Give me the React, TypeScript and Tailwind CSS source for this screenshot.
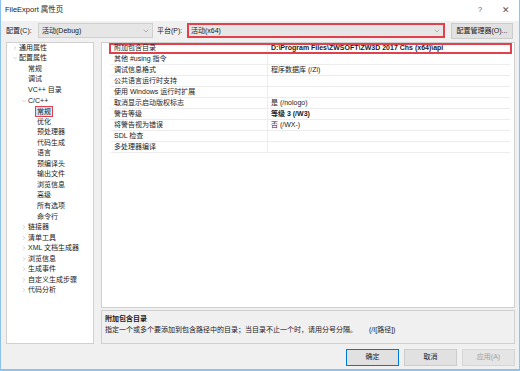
import React from 'react';
import { ChevronDown, ChevronRight } from 'lucide-react';

type TreeItem = { label: string; level: number; arrow?: 'closed' | 'open'; selected?: boolean };

const TREE: TreeItem[] = [
  { label: '通用属性', level: 0, arrow: 'closed' },
  { label: '配置属性', level: 0, arrow: 'open' },
  { label: '常规', level: 1 },
  { label: '调试', level: 1 },
  { label: 'VC++ 目录', level: 1 },
  { label: 'C/C++', level: 1, arrow: 'open' },
  { label: '常规', level: 2, selected: true },
  { label: '优化', level: 2 },
  { label: '预处理器', level: 2 },
  { label: '代码生成', level: 2 },
  { label: '语言', level: 2 },
  { label: '预编译头', level: 2 },
  { label: '输出文件', level: 2 },
  { label: '浏览信息', level: 2 },
  { label: '高级', level: 2 },
  { label: '所有选项', level: 2 },
  { label: '命令行', level: 2 },
  { label: '链接器', level: 1, arrow: 'closed' },
  { label: '清单工具', level: 1, arrow: 'closed' },
  { label: 'XML 文档生成器', level: 1, arrow: 'closed' },
  { label: '浏览信息', level: 1, arrow: 'closed' },
  { label: '生成事件', level: 1, arrow: 'closed' },
  { label: '自定义生成步骤', level: 1, arrow: 'closed' },
  { label: '代码分析', level: 1, arrow: 'closed' },
];

const PROPS: { name: string; value: string; bold?: boolean }[] = [
  { name: '附加包含目录', value: 'D:\\Program Files\\ZWSOFT\\ZW3D 2017 Chs (x64)\\api', bold: true },
  { name: '其他 #using 指令', value: '' },
  { name: '调试信息格式', value: '程序数据库 (/Zi)' },
  { name: '公共语言运行时支持', value: '' },
  { name: '使用 Windows 运行时扩展', value: '' },
  { name: '取消显示启动版权标志', value: '是 (/nologo)' },
  { name: '警告等级', value: '等级 3 (/W3)', bold: true },
  { name: '将警告视为错误', value: '否 (/WX-)' },
  { name: 'SDL 检查', value: '' },
  { name: '多处理器编译', value: '' },
];

const indent = ['pl-[3px]', 'pl-[12px]', 'pl-[21px]'];

const App: React.FC = () => {
  return (
    <div
      className="w-[520px] h-[371px] bg-[#f0f0f0] border-x border-b-2 border-[#8cc3ee] flex flex-col text-[7px] leading-[10px] text-[#1a1a1a] whitespace-nowrap"
      style={{ fontFamily: "'Liberation Sans', 'Noto Sans CJK SC', sans-serif" }}
    >
      {/* Title bar */}
      <div className="h-[21px] bg-white flex items-center pl-[4px] pr-[7px] text-[7.5px]">
        <span className="flex-1">FileExport 属性页</span>
        <span className="w-[12px] text-center text-[#555]">?</span>
        <span className="w-[12px] text-center text-[9px] text-[#555] ml-[14px]">✕</span>
      </div>

      {/* Config row */}
      <div className="h-[16px] flex items-center pl-[5px] pr-[6px] mt-[2px]">
        <span className="w-[32px]">配置(C):</span>
        <div className="w-[115px] h-[15px] bg-[#e6e6e6] border border-[#cfcfcf] flex items-center pl-[3px] pr-[2px]">
          <span className="flex-1">活动(Debug)</span>
          <ChevronDown size={8} strokeWidth={1.5} className="text-[#777]" />
        </div>
        <span className="ml-[4px] w-[30px]">平台(P):</span>
        <div className="w-[258px] h-[15px] bg-[#e6e6e6] border-2 border-[#e2404a] flex items-center pl-[2px] pr-[2px]">
          <span className="flex-1">活动(x64)</span>
          <ChevronDown size={8} strokeWidth={1.5} className="text-[#777]" />
        </div>
        <div className="ml-[6px] flex-1 h-[16px] bg-[#e1e1e1] border border-[#cccccc] flex items-center justify-center">
          配置管理器(O)...
        </div>
      </div>

      {/* Main area */}
      <div className="flex-1 flex gap-[7px] pl-[5px] pr-[4px] mt-[3px]">
        {/* Tree */}
        <div className="w-[88px] h-[302px] bg-white border border-[#d0d0d0] pt-[0px]">
          {TREE.map((t, i) => (
            <div key={i} className={`h-[10.55px] flex items-center ${indent[t.level]}`}>
              <span className="w-[9px] flex items-center justify-center text-[#888]">
                {t.arrow === 'closed' && <ChevronRight size={6} strokeWidth={1.5} />}
                {t.arrow === 'open' && <ChevronDown size={6} strokeWidth={1.5} />}
              </span>
              <span
                className={
                  t.selected
                    ? 'bg-[#cce8ff] border border-[#e2404a] px-[1px] leading-[9px] ml-[-2px]'
                    : ''
                }
              >
                {t.label}
              </span>
            </div>
          ))}
        </div>

        {/* Right column */}
        <div className="flex-1 flex flex-col gap-[2px]">
          <div className="h-[266px] bg-white border border-[#d0d0d0] flex flex-col">
            <div className="pl-[7px] pr-[2px]">
              {PROPS.map((p, i) => (
                <div
                  key={i}
                  className={`h-[11px] flex items-center ${
                    i === 0 ? 'border-2 border-[#e2404a]' : 'border-b border-[#ececec] mx-[2px]'
                  }`}
                >
                  <span className="w-[157px] pl-[3px] border-r border-[#ececec] h-full flex items-center">
                    {p.name}
                  </span>
                  <span className={`pl-[3px] ${p.bold ? 'font-bold' : ''}`}>{p.value}</span>
                </div>
              ))}
            </div>
          </div>
          <div className="h-[34px] border border-[#d0d0d0] px-[3px] pt-[3px]">
            <div className="font-bold">附加包含目录</div>
            <div className="flex mt-[1px]">
              <span className="w-[264px]">指定一个或多个要添加到包含路径中的目录；当目录不止一个时，请用分号分隔。</span>
              <span>(/I[路径])</span>
            </div>
          </div>
        </div>
      </div>

      {/* Buttons */}
      <div className="h-[21px] flex items-start justify-end gap-[5px] pr-[4px] mt-[5px]">
        <div className="w-[53px] h-[17px] bg-[#e1e1e1] border border-[#0078d7] flex items-center justify-center">确定</div>
        <div className="w-[53px] h-[17px] bg-[#e1e1e1] border border-[#cccccc] flex items-center justify-center">取消</div>
        <div className="w-[53px] h-[17px] bg-[#e5e5e5] border border-[#d6d6d6] flex items-center justify-center text-[#a0a0a0]">
          应用(A)
        </div>
      </div>
    </div>
  );
};

export default App;
